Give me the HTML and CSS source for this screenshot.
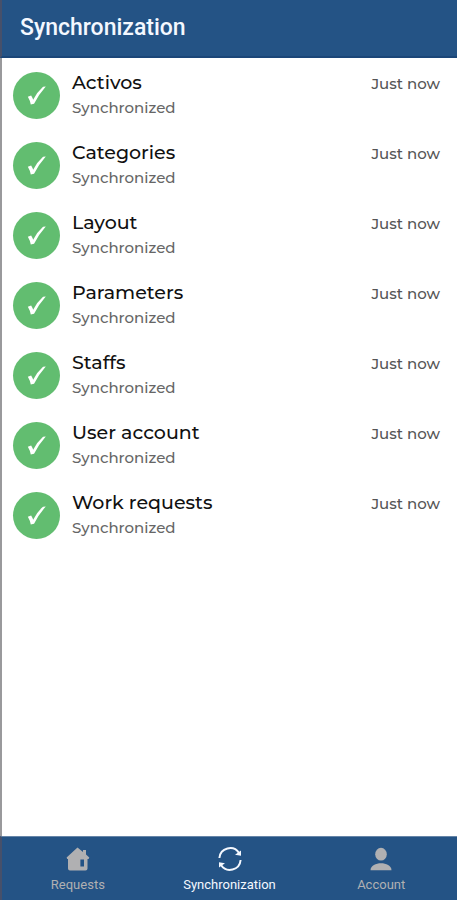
FILE: index.html
```html
<!DOCTYPE html>
<html lang="en">
<head>
    <meta charset="UTF-8">
    <meta name="viewport" content="width=device-width, initial-scale=1.0">
    <title>Synchronization</title>
    <link rel="stylesheet" href="styles.css">
</head>
<body>
    <header class="topbar">
        <h1>Synchronization</h1>
    </header>

    <main class="content">
        <ul class="sync-list" id="syncList"></ul>
    </main>

    <nav class="tabbar">
        <a href="#requests" class="tab">
            <svg viewBox="0 0 24 24" aria-hidden="true">
                <path fill="currentColor" fill-rule="evenodd" d="M11.5 0.5 17 5V3H20V7.6L23.3 10.6 22.6 12H21.5V21.5Q21.5 23.5 19.5 23.5H4Q2 23.5 2 21.5V12H1.2L0.6 10.6ZM14.4 12.6V19.4H18V12.6Z"/>
            </svg>
            <span>Requests</span>
        </a>
        <a href="#synchronization" class="tab active">
            <svg viewBox="0 0 24 24" aria-hidden="true">
                <path fill="none" stroke="currentColor" stroke-width="2" d="M1.4 11A10.7 10.7 0 0 1 21 6M22.6 13A10.7 10.7 0 0 1 3 18"/>
                <path fill="currentColor" d="M23 3.6V8.8L17 7.8ZM1 20.4V15.2L7 16.2Z"/>
            </svg>
            <span>Synchronization</span>
        </a>
        <a href="#account" class="tab">
            <svg viewBox="0 0 24 24" aria-hidden="true">
                <ellipse fill="currentColor" cx="12" cy="7.2" rx="5.8" ry="6.4"/>
                <path fill="currentColor" d="M1.5 23.2C1.5 18.4 7 16.2 12 16.2S22.5 18.4 22.5 23.2Z"/>
            </svg>
            <span>Account</span>
        </a>
    </nav>

    <script>
        const items = ["Activos", "Categories", "Layout", "Parameters", "Staffs", "User account", "Work requests"];

        document.getElementById("syncList").innerHTML = items.map(name => `
            <li class="sync-item">
                <span class="status">
                    <svg viewBox="0 0 24 24" aria-hidden="true">
                        <path fill="currentColor" d="M2 12.8 5.6 11.4Q7 13.6 7.8 16Q12 7.6 18.6 1.8L21.6 1.6Q13.6 10.6 8.8 20.4L5.2 21.2Q4.4 16.8 2 12.8Z"/>
                    </svg>
                </span>
                <div class="info">
                    <h2>${name}</h2>
                    <p>Synchronized</p>
                </div>
                <span class="time">Just now</span>
            </li>`).join("");
    </script>
</body>
</html>
```
FILE: styles.css
```css
* {
    margin: 0;
    padding: 0;
    box-sizing: border-box;
}
body {
    min-height: 100vh;
    display: flex;
    flex-direction: column;
    background-color: #fff;
    color: #111;
    font-family: Montserrat, Inter, sans-serif;
}
.topbar {
    padding: 13px 18px;
    background-color: #245385;
    border-left: 2px solid #46506a;
    border-bottom: 2px solid #1b4678;
    color: #f4f8ff;
    font-family: Roboto, sans-serif;
}
.topbar h1 {
    font-size: 23px;
    line-height: 30px;
    font-weight: 500;
}
.content {
    flex: 1;
    padding: 14px 17px 0 11px;
    border-left: 2px solid #99999c;
}
.sync-list {
    list-style: none;
    display: flex;
    flex-direction: column;
    gap: 23px;
}
.sync-item {
    display: flex;
    align-items: flex-start;
    gap: 12px;
}
.status {
    width: 47px;
    height: 47px;
    display: flex;
    align-items: center;
    justify-content: center;
    border-radius: 50%;
    background-color: #62bd70;
    color: #fff;
}
.status svg {
    width: 22px;
    height: 22px;
}
.info {
    flex: 1;
}
.info h2 {
    font-size: 19px;
    line-height: 22px;
    font-weight: 500;
}
.info p {
    margin-top: 4px;
    font-size: 15px;
    line-height: 20px;
    font-weight: 500;
    color: #666;
}
.time {
    padding-top: 2px;
    font-size: 15px;
    line-height: 20px;
    font-weight: 500;
    color: #555;
}
.tabbar {
    display: flex;
    height: 64px;
    background-color: #245385;
    border-left: 2px solid #46506a;
    border-top: 1px solid #6685a8;
    font-family: Roboto, sans-serif;
}
.tab {
    flex: 1;
    display: flex;
    flex-direction: column;
    align-items: center;
    gap: 6px;
    padding-top: 10px;
    color: #b0b0b2;
    font-size: 13px;
    line-height: 16px;
    text-decoration: none;
}
.tab svg {
    width: 24px;
    height: 24px;
}
.tab.active {
    color: #f4f8ff;
}
```
